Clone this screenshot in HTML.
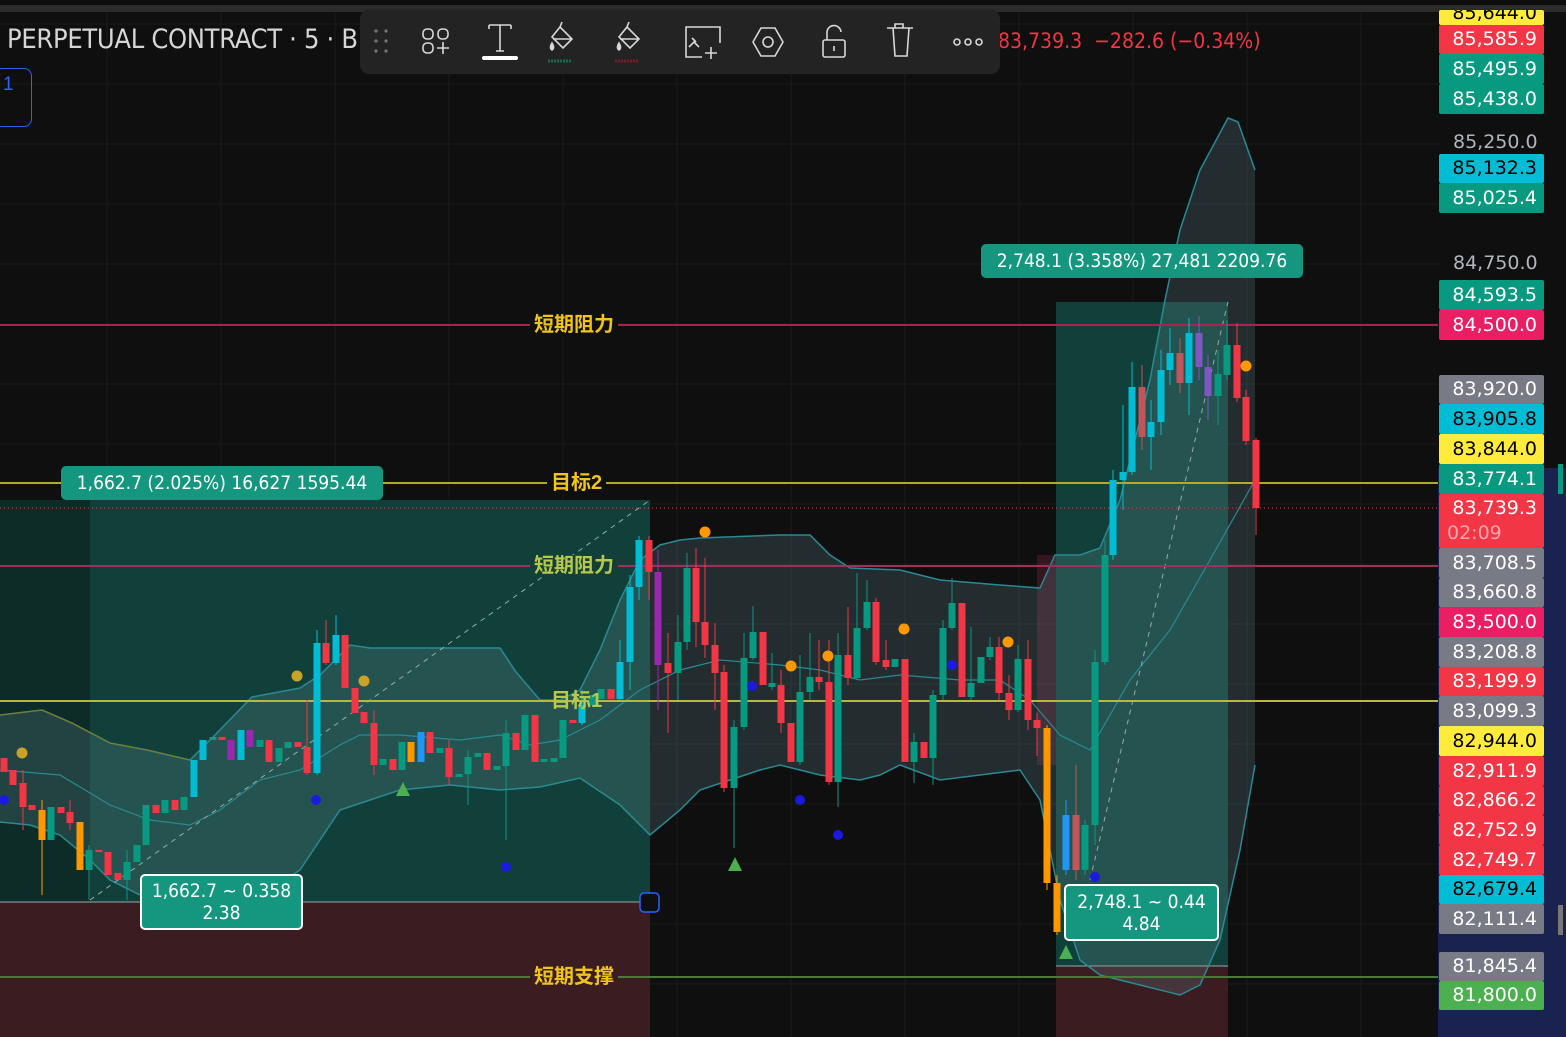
<!DOCTYPE html>
<html><head><meta charset="utf-8"><style>
html,body{margin:0;padding:0;background:#0f0f0f;width:1566px;height:1037px;overflow:hidden;font-family:"Liberation Sans","Noto Sans CJK SC",sans-serif}
#c{position:absolute;left:0;top:0}
.t{position:absolute;white-space:nowrap}
.pl{position:absolute;left:1439px;width:105px;height:30px;font:19px "DejaVu Sans",sans-serif;color:#fff;text-align:right;line-height:30px;box-sizing:border-box;padding-right:7px;border-radius:2px}
.lbl{position:absolute;background:#15977f;color:#fff;font-size:19px;border-radius:5px;text-align:center;font-family:"DejaVu Sans Condensed","Liberation Sans",sans-serif}
.cn{position:absolute;font-size:20px;background:#0f0f0f;padding:0 4px;line-height:22px;font-weight:bold}
</style></head><body>
<svg id="c" width="1566" height="1037" xmlns="http://www.w3.org/2000/svg"></svg>

<div class="t" style="left:7px;top:24px;font-size:27px;color:#d6d6d6;letter-spacing:-0.3px;font-family:'DejaVu Sans Condensed','Liberation Sans',sans-serif">PERPETUAL CONTRACT · 5 · B</div>
<div class="t" style="left:998px;top:29px;font-size:21px;color:#f23645;font-family:'DejaVu Sans Condensed','Liberation Sans',sans-serif">83,739.3 &nbsp;−282.6 (−0.34%)</div>

<div style="position:absolute;left:360px;top:10px;width:640px;height:64px;background:#232323;border-radius:9px"></div>
<svg style="position:absolute;left:360px;top:10px" width="640" height="64" fill="none" stroke="#d8d8d8" stroke-width="1.6">
 <g fill="#777" stroke="none"><circle cx="16" cy="21" r="1.6"/><circle cx="26" cy="21" r="1.6"/><circle cx="16" cy="31" r="1.6"/><circle cx="26" cy="31" r="1.6"/><circle cx="16" cy="41" r="1.6"/><circle cx="26" cy="41" r="1.6"/></g>
 <rect x="63" y="19" width="10" height="10" rx="4"/><rect x="78" y="19" width="10" height="10" rx="4"/><rect x="63" y="33" width="10" height="10" rx="4"/><path d="M77 38h12M83 32v12"/>
 <path d="M129 15h22M129 15v4M151 15v4M140 15v26M136 41h8"/><rect x="122" y="46" width="36" height="4" rx="2" fill="#fff" stroke="none"/>
 <path d="M200 17l12 12-9 9-11-11zM200 17l2-5M193 29h18"/><path d="M192 33q-3 5 0 7q3-2 0-7z" fill="#d8d8d8"/><path d="M188 51h24" stroke="#0d6b4d" stroke-width="3" stroke-dasharray="2 1"/>
 <path d="M267 17l12 12-9 9-11-11zM267 17l2-5M260 29h18"/><path d="M259 33q-3 5 0 7q3-2 0-7z" fill="#d8d8d8"/><path d="M255 51h24" stroke="#7a1b25" stroke-width="3" stroke-dasharray="2 1"/>
 <path d="M342 47h-16v-30h34v16M329 37l5-5 5 5M332 28l4 4M351 37v12M345 43h12"/>
 <path d="M401 18h14l8 14-8 14h-14l-8-14z"/><circle cx="408" cy="32" r="5"/>
 <rect x="463" y="30" width="22" height="17" rx="2"/><path d="M467 30v-7a7 7 0 0 1 14-1M474 36v5"/>
 <path d="M527 18h26M533 18l2 28h12l2-28M535 18v-4h8v4"/>
 <circle cx="597" cy="32" r="3"/><circle cx="608" cy="32" r="3"/><circle cx="619" cy="32" r="3"/>
</svg>

<div style="position:absolute;left:-6px;top:68px;width:38px;height:59px;border:1.5px solid #2962ff;border-radius:8px;box-sizing:border-box"></div>
<div class="t" style="left:3px;top:74px;color:#2962ff;font-size:19px">1</div>

<div class="cn" style="left:530px;top:314px;color:#f0c419">短期阻力</div>
<div class="cn" style="left:547px;top:472px;color:#f0c419">目标2</div>
<div class="cn" style="left:530px;top:555px;color:#b8c84a;background:#124038">短期阻力</div>
<div class="cn" style="left:547px;top:690px;color:#b8c84a;background:transparent">目标1</div>
<div class="cn" style="left:530px;top:966px;color:#f0c419;background:#3b1c20">短期支撑</div>

<div class="lbl" style="left:61px;top:466px;width:322px;height:34px;line-height:34px">1,662.7 (2.025%) 16,627 1595.44</div>
<div class="lbl" style="left:981px;top:244px;width:322px;height:34px;line-height:34px">2,748.1 (3.358%) 27,481 2209.76</div>
<div class="lbl" style="left:140px;top:874px;width:163px;height:56px;border:2px solid #fff;box-sizing:border-box;line-height:22px;padding-top:4px">1,662.7 ~ 0.358<br>2.38</div>
<div class="lbl" style="left:1064px;top:884px;width:155px;height:57px;border:2px solid #fff;box-sizing:border-box;line-height:22px;padding-top:5px">2,748.1 ~ 0.44<br>4.84</div>

<div id="axis"></div>
<div class="t" style="left:1453px;top:131px;color:#b2b5be;font:19px 'DejaVu Sans',sans-serif">85,250.0</div>
<div class="t" style="left:1453px;top:252px;color:#b2b5be;font:19px 'DejaVu Sans',sans-serif">84,750.0</div>

<script>
const S=document.getElementById('c');let h='';
const R=(x,y,w,hh,f)=>h+=`<rect x="${x}" y="${y}" width="${w}" height="${hh}" fill="${f}"/>`;
const L=(a,b,c,d,s,w,da)=>h+=`<line x1="${a}" y1="${b}" x2="${c}" y2="${d}" stroke="${s}" stroke-width="${w}" ${da?`stroke-dasharray="${da}"`:''}/>`;
R(0,0,1566,5,'#0c0c0c');R(0,5,1566,7,'#2b2b2b');
for(let y=24;y<1037;y+=60)L(0,y,1438,y,'#1b1b1b',1);
for(let x=107;x<1438;x+=114)L(x,12,x,1037,'#1b1b1b',1);
R(0,500,90,402,'#0e2c27');R(90,500,560,402,'#11403a');R(0,902,650,135,'#3b1c20');L(0,902,650,902,'#9aa',1);
R(1056,302,172,664,'#11403a');R(1056,966,172,71,'#3b1c20');L(1056,966,1228,966,'#9aa',1);
R(1037,555,19,210,'rgba(130,40,70,0.35)');
const up=[[0,715],[42,710],[72,723],[110,743],[147,750],[190,760],[215,735],[252,697],[300,688],[320,675],[350,645],[370,648],[410,648],[500,648],[516,672],[540,700],[560,700],[580,690],[600,650],[620,600],[640,560],[660,545],[680,540],[700,538],[780,535],[810,535],[830,555],[850,568],[900,570],[940,580],[1000,585],[1040,588],[1055,555],[1080,555],[1100,548],[1120,500],[1150,380],[1165,300],[1180,230],[1200,170],[1228,118],[1238,122],[1255,170]];
const lo=[[0,822],[30,825],[60,835],[90,860],[110,880],[140,895],[180,900],[220,900],[260,895],[285,880],[300,870],[320,840],[340,810],[370,800],[400,790],[450,785],[500,790],[540,787],[580,778],[620,805],[650,835],[680,810],[700,790],[730,780],[760,770],[780,765],[820,775],[860,780],[880,775],[900,765],[940,780],[1020,770],[1040,800],[1060,900],[1080,960],[1100,975],[1140,985],[1180,995],[1200,985],[1220,940],[1240,850],[1255,765]];
const mid=[[0,770],[60,775],[110,805],[150,820],[190,825],[220,810],[260,780],[300,770],[340,745],[360,735],[400,735],[460,740],[500,735],[530,745],[560,740],[600,720],[640,690],[680,670],[720,660],[780,665],[820,670],[860,680],[900,675],[960,680],[1000,680],[1030,700],[1060,735],[1090,750],[1130,680],[1170,630],[1210,560],[1255,480]];
const P=a=>a.map(p=>p.join(',')).join(' ');
h+=`<polygon points="${P(up)} ${P([...lo].reverse())}" fill="rgba(110,150,160,0.22)"/>`;
h+=`<polyline points="${P(up)}" fill="none" stroke="#2a8a94" stroke-width="1.5"/>`;
h+=`<polyline points="${P(lo)}" fill="none" stroke="#2a8a94" stroke-width="1.5"/>`;
h+=`<polyline points="${P(mid)}" fill="none" stroke="#2a8a94" stroke-width="1.2"/>`;
h+=`<polyline points="0,715 42,710 72,723 110,743 147,750 190,760" fill="none" stroke="#7a7a30" stroke-width="1.3"/>`;
L(90,900,650,500,'#9aa',1,'5 5');L(1090,880,1228,302,'#9aa',1,'5 5');
L(0,325,1438,325,'#b0204f',2);L(0,566,1438,566,'#a0305a',2);L(0,483,1438,483,'#b5a92a',2);L(0,701,1438,701,'#b8b840',2);L(0,977,1438,977,'#4a7a3a',2);
L(0,508,1438,508,'#f23645',1,'1 3');
const C={r:'#f23645',g:'#089981',c:'#00bcd4',o:'#ff9800',p:'#9c27b0',b:'#2196f3',m:'#c0555a',v:'#7e57c2'};
const cs=[
[4,'r',758,772],[13,'r',770,785],[23,'r',783,807,770,830],[32,'r',805,810],[42,'o',810,840,800,895],[51,'g',807,840],[61,'r',807,813],[70,'r',812,823,800,830],[80,'o',822,870],[89,'g',850,870,845,900],[99,'r',850,852],[108,'r',852,875],[118,'r',873,880],[127,'g',862,880,850,900],[137,'g',845,862],[146,'g',805,845],[156,'r',805,813],[165,'g',800,813],[175,'r',800,810],[184,'g',797,810],[194,'c',760,797],[203,'c',740,760],[213,'g',737,740],[222,'r',737,740],[231,'p',740,760],[241,'c',730,760],[250,'p',730,747],[260,'g',740,747],[269,'r',740,762],[279,'g',748,762],[288,'g',742,748],[298,'r',742,747],[307,'r',747,773,700,775],[317,'c',643,773,630,775],[326,'r',643,663,620,665],[336,'c',635,663,615,665],[345,'r',635,688],[355,'r',688,713],[364,'r',712,723],[374,'r',723,765,710,775],[383,'g',759,765],[393,'r',759,770],[402,'g',742,770],[411,'o',742,762],[421,'b',732,762],[430,'r',732,753],[440,'g',748,753],[449,'r',748,777,740,785],[459,'g',774,777],[468,'g',757,774,750,805],[478,'g',753,757],[487,'r',753,770],[497,'g',766,770],[506,'g',733,766,720,840],[516,'r',733,750],[525,'g',715,750],[535,'r',715,762],[544,'g',759,762],[554,'g',758,762],[563,'g',720,758],[573,'r',720,723],[582,'c',705,723,690,725],[592,'g',695,705],[601,'g',689,699],[611,'r',689,699],[620,'c',662,699,640,700],[630,'c',587,662,575,690],[639,'c',540,587,536,600],[649,'r',540,572,536,600],
[658,'p',572,665,550,710],[668,'r',663,673,633,733],[678,'g',642,673,615,700],[687,'g',568,642,553,650],[696,'r',568,622,548,647],[705,'r',622,645,558,658],[715,'r',645,673,623,710],[724,'r',672,788,665,792],[734,'g',727,788,720,848],[744,'g',658,727,633,730],[753,'g',632,658,606,660],[763,'r',632,685],[772,'g',683,687,653,690],[781,'r',685,723,670,733],[791,'r',723,762],[800,'g',692,762,655,765],[810,'g',677,692,633,700],[819,'r',677,682,640,690],[829,'r',682,782,640,785],[838,'g',655,782,633,807],[848,'r',655,678,607,685],[857,'g',628,678,573,680],[867,'g',602,628,580,630],[876,'r',602,662,598,665],[886,'r',660,667,640,670],[895,'g',659,667],[905,'r',659,762],[914,'g',742,762,733,783],[924,'r',742,758],[933,'g',695,758,690,785],[943,'g',628,695,620,700],[952,'g',603,628,578,630],[962,'r',603,697],[971,'g',683,697,627,700],[981,'g',657,683],[990,'g',647,657,637,660],[999,'r',647,693,637,700],[1009,'r',693,710,675,720],[1018,'g',659,710,645,712],[1028,'r',659,720,640,730],[1037,'r',720,728,713,756],[1047,'o',728,883,725,890],[1057,'o',883,932,875,935],[1066,'b',815,870,800,875],[1076,'m',815,870,765,880],[1085,'g',825,870,820,875],[1095,'g',662,825,650,845],[1105,'g',555,662,540,665],
[1113,'c',480,555,470,560],[1123,'c',472,480,405,510],[1132,'c',387,472,362,475],[1142,'m',387,437,365,450],[1151,'c',422,437,400,470],[1161,'c',370,422,350,435],[1170,'c',353,370,328,385],[1180,'m',353,383,338,393],[1189,'c',333,383,318,415],[1199,'v',333,367,316,380],[1208,'v',367,396,355,420],[1218,'g',374,396,350,425],[1227,'g',345,375,320,380],[1237,'r',345,398,323,402],[1246,'r',397,441,390,445],[1256,'r',440,508,438,535]];
for(const [x,k,t,b,wt,wb] of cs){const col=C[k];if(wt!==undefined)L(x,wt,x,wb,col,1);R(x-3.5,t,7,Math.max(2,b-t),col);}
for(const [x,y] of [[22,753],[297,676],[364,681]])h+=`<circle cx="${x}" cy="${y}" r="5.5" fill="#c9a227"/>`;
for(const [x,y] of [[705,532],[791,666],[828,656],[904,629],[1008,642],[1246,366]])h+=`<circle cx="${x}" cy="${y}" r="5.5" fill="#ff9800"/>`;
for(const [x,y] of [[4,800],[316,800],[506,867],[752,686],[800,800],[838,835],[952,665],[1095,877]])h+=`<circle cx="${x}" cy="${y}" r="5" fill="#1a1ae0"/>`;
for(const [x,y] of [[403,790],[735,865],[1066,953]])h+=`<polygon points="${x},${y-8} ${x+7},${y+6} ${x-7},${y+6}" fill="#4caf50"/>`;
h+=`<rect x="640" y="893" width="19" height="19" rx="4" fill="#0f0f0f" stroke="#2962ff" stroke-width="1.5"/>`;
R(1438,12,128,456,'#0f0f0f');R(1438,468,128,569,'#1a2250');R(1545,12,21,456,'#0f0f0f');
R(1558,464,5,30,'#089981');R(1558,905,5,30,'#777');
S.innerHTML=h;
const lab=[[10,15,'85,644.0','#ffeb3b','#000'],[25,29,'85,585.9','#f23645'],[54,30,'85,495.9','#089981'],[84,30,'85,438.0','#089981'],[154,29,'85,132.3','#00bcd4','#000'],[183,30,'85,025.4','#089981'],[280,30,'84,593.5','#089981'],[310,30,'84,500.0','#e91e63'],[375,29,'83,920.0','#787b86'],[404,30,'83,905.8','#00bcd4','#000'],[434,30,'83,844.0','#ffeb3b','#000'],[464,30,'83,774.1','#089981'],[548,30,'83,708.5','#787b86'],[578,29,'83,660.8','#787b86'],[607,30,'83,500.0','#e91e63'],[637,30,'83,208.8','#787b86'],[667,29,'83,199.9','#f23645'],[696,30,'83,099.3','#787b86'],[726,30,'82,944.0','#ffeb3b','#000'],[756,30,'82,911.9','#f23645'],[786,29,'82,866.2','#f23645'],[815,30,'82,752.9','#f23645'],[845,30,'82,749.7','#f23645'],[875,29,'82,679.4','#00bcd4','#000'],[904,30,'82,111.4','#787b86'],[952,29,'81,845.4','#787b86'],[981,29,'81,800.0','#4caf50']];
let a='';for(const [t,hh,s,bg,fg] of lab)a+=`<div class="pl" style="top:${t}px;height:${hh}px;line-height:${hh}px;background:${bg};color:${fg||'#fff'};${t==10?'line-height:6px;overflow:hidden':''}">${s}</div>`;
a+=`<div class="pl" style="top:494px;height:54px;background:#f23645;line-height:25px;padding-top:2px">83,739.3<br><span style="color:#f8a5ac;display:block;text-align:left;padding-left:8px">02:09</span></div>`;
document.getElementById('axis').innerHTML=a;
</script>
</body></html>
